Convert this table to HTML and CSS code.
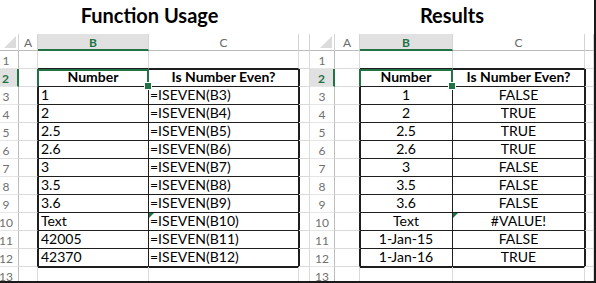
FILE: index.html
```html
<!DOCTYPE html>
<html lang="en">
<head>
<meta charset="utf-8">
<title>ISEVEN Function</title>
<link rel="stylesheet" href="styles.css">
</head>
<body>
<div class="frame">
  <section class="sheet left">
    <h1 class="title">Function Usage</h1>
    <div class="ch corner"><span class="tri"></span></div><div class="ch">A</div><div class="ch sel">B</div><div class="ch">C</div><div class="ch"></div>
    <div class="rh">1</div><div class="c"></div><div class="c ab"></div><div class="c ab"></div><div class="c"></div>
    <div class="rh sel">2</div><div class="c ta"></div><div class="c t th tt tl cur">Number</div><div class="c t th tt">Is Number Even?</div><div class="c tr"></div>
    <div class="rh">3</div><div class="c ta"></div><div class="c t tl l">1</div><div class="c t f">=ISEVEN(B3)</div><div class="c tr"></div>
    <div class="rh">4</div><div class="c ta"></div><div class="c t tl l">2</div><div class="c t f">=ISEVEN(B4)</div><div class="c tr"></div>
    <div class="rh">5</div><div class="c ta"></div><div class="c t tl l">2.5</div><div class="c t f">=ISEVEN(B5)</div><div class="c tr"></div>
    <div class="rh">6</div><div class="c ta"></div><div class="c t tl l">2.6</div><div class="c t f">=ISEVEN(B6)</div><div class="c tr"></div>
    <div class="rh">7</div><div class="c ta"></div><div class="c t tl l">3</div><div class="c t f">=ISEVEN(B7)</div><div class="c tr"></div>
    <div class="rh">8</div><div class="c ta"></div><div class="c t tl l">3.5</div><div class="c t f">=ISEVEN(B8)</div><div class="c tr"></div>
    <div class="rh">9</div><div class="c ta"></div><div class="c t tl l">3.6</div><div class="c t f">=ISEVEN(B9)</div><div class="c tr"></div>
    <div class="rh">10</div><div class="c ta"></div><div class="c t tl l">Text</div><div class="c t f err">=ISEVEN(B10)</div><div class="c tr"></div>
    <div class="rh">11</div><div class="c ta"></div><div class="c t tl l">42005</div><div class="c t f">=ISEVEN(B11)</div><div class="c tr"></div>
    <div class="rh">12</div><div class="c ta"></div><div class="c t tl l">42370</div><div class="c t f">=ISEVEN(B12)</div><div class="c tr"></div>
    <div class="rh last">13</div><div class="c last"></div><div class="c last tb"></div><div class="c last tb"></div><div class="c last"></div>
  </section>
  <section class="sheet right">
    <h1 class="title">Results</h1>
    <div class="ch corner"><span class="tri"></span></div><div class="ch">A</div><div class="ch sel">B</div><div class="ch">C</div><div class="ch"></div>
    <div class="rh">1</div><div class="c"></div><div class="c ab"></div><div class="c ab"></div><div class="c"></div>
    <div class="rh sel">2</div><div class="c ta"></div><div class="c t th tt tl cur">Number</div><div class="c t th tt">Is Number Even?</div><div class="c tr"></div>
    <div class="rh">3</div><div class="c ta"></div><div class="c t tl m">1</div><div class="c t m">FALSE</div><div class="c tr"></div>
    <div class="rh">4</div><div class="c ta"></div><div class="c t tl m">2</div><div class="c t m">TRUE</div><div class="c tr"></div>
    <div class="rh">5</div><div class="c ta"></div><div class="c t tl m">2.5</div><div class="c t m">TRUE</div><div class="c tr"></div>
    <div class="rh">6</div><div class="c ta"></div><div class="c t tl m">2.6</div><div class="c t m">TRUE</div><div class="c tr"></div>
    <div class="rh">7</div><div class="c ta"></div><div class="c t tl m">3</div><div class="c t m">FALSE</div><div class="c tr"></div>
    <div class="rh">8</div><div class="c ta"></div><div class="c t tl m">3.5</div><div class="c t m">FALSE</div><div class="c tr"></div>
    <div class="rh">9</div><div class="c ta"></div><div class="c t tl m">3.6</div><div class="c t m">FALSE</div><div class="c tr"></div>
    <div class="rh">10</div><div class="c ta"></div><div class="c t tl m">Text</div><div class="c t m err">#VALUE!</div><div class="c tr"></div>
    <div class="rh">11</div><div class="c ta"></div><div class="c t tl m">1-Jan-15</div><div class="c t m">FALSE</div><div class="c tr"></div>
    <div class="rh">12</div><div class="c ta"></div><div class="c t tl m">1-Jan-16</div><div class="c t m">TRUE</div><div class="c tr"></div>
    <div class="rh last">13</div><div class="c last"></div><div class="c last tb"></div><div class="c last tb"></div><div class="c last"></div>
  </section>
</div>
</body>
</html>
```

FILE: styles.css
```css
* { box-sizing: border-box; }
html, body { margin: 0; padding: 0; background: #fff; }
body { font-family: Lato, "Open Sans", sans-serif; color: #111; }

.frame {
  display: flex;
  width: 596px;
  height: 283px;
  border-right: 2px solid #1a1a1a;
  border-bottom: 2px solid #1a1a1a;
  overflow: hidden;
}

.sheet {
  display: grid;
  grid-template-rows: 34px 17px repeat(12, 18px) 14px;
}
.left { width: 310px; grid-template-columns: 19px 19px 111px 150px 11px; }
.right { width: 284px; grid-template-columns: 25px 25px 93px 132px 9px; }

.title {
  grid-column: 1 / -1;
  margin: 0;
  font-size: 20px;
  font-weight: 700;
  text-align: center;
  line-height: 30px;
  color: #000;
}
.left .title { padding-right: 11px; }

/* column headers */
.ch {
  display: flex;
  align-items: center;
  justify-content: center;
  font-size: 12px;
  color: #6a6a6a;
  border-right: 1px solid #d4d4d4;
  border-bottom: 1px solid #bdbdbd;
  padding-top: 1px;
}
.ch.sel {
  background: #e1e1e1;
  color: #217346;
  font-weight: 700;
  border-bottom: 2px solid #217346;
}
.corner { align-items: flex-end; justify-content: flex-end; padding: 0 2px 2px 0; }
.tri {
  width: 0;
  height: 0;
  border-left: 12px solid transparent;
  border-bottom: 12px solid #dcdcdc;
}

/* row headers */
.rh {
  display: flex;
  align-items: center;
  justify-content: center;
  font-size: 12px;
  color: #707070;
  border-right: 1px solid #bdbdbd;
  border-bottom: 1px solid #e6e6e6;
  padding-top: 1px;
}
.left .rh { padding-right: 6px; }
.rh.sel {
  background: #e1e1e1;
  color: #217346;
  font-weight: 700;
  border-right: 2px solid #217346;
}

/* cells */
.c {
  display: flex;
  align-items: flex-end;
  white-space: nowrap;
  overflow: hidden;
  min-width: 0;
  font-size: 14px;
  line-height: 16px;
  padding-bottom: 1px;
  border-right: 1px solid #dadada;
  border-bottom: 1px solid #dadada;
}
.last { align-items: flex-start; border-bottom: none; padding-top: 2px; }
.rh.last { align-items: flex-start; }

/* table borders */
.t { border-right-color: #1e1e1e; border-bottom-color: #1e1e1e; color: #000; }
.ab { border-bottom-color: #1e1e1e; }
.ta { border-right-color: #1e1e1e; }
.tl { box-shadow: inset 1px 0 0 #1e1e1e; }
.tt { box-shadow: inset 0 1px 0 #1e1e1e; }
.tl.tt { box-shadow: inset 1px 1px 0 #1e1e1e; }
.tr { box-shadow: inset 1px 0 0 #1e1e1e; }
.tb { box-shadow: inset 0 1px 0 #1e1e1e; }

.th { justify-content: center; font-weight: 700; }
.l { padding-left: 3px; }
.f { padding-left: 1px; }
.m { justify-content: center; }

.err { position: relative; }
.err::before {
  content: "";
  position: absolute;
  top: 0;
  left: 0;
  border-top: 5px solid #217346;
  border-right: 5px solid transparent;
}

/* active cell (B2) */
.cur { position: relative; overflow: visible; }
.cur::after {
  content: "";
  position: absolute;
  top: 0;
  left: -1px;
  right: -1px;
  bottom: 0;
  border: 2px solid #217346;
  border-bottom: none;
  pointer-events: none;
}
.cur::before {
  content: "";
  position: absolute;
  right: -4px;
  bottom: -4px;
  width: 6px;
  height: 6px;
  background: #217346;
  border: 1px solid #fff;
  z-index: 1;
}
```
